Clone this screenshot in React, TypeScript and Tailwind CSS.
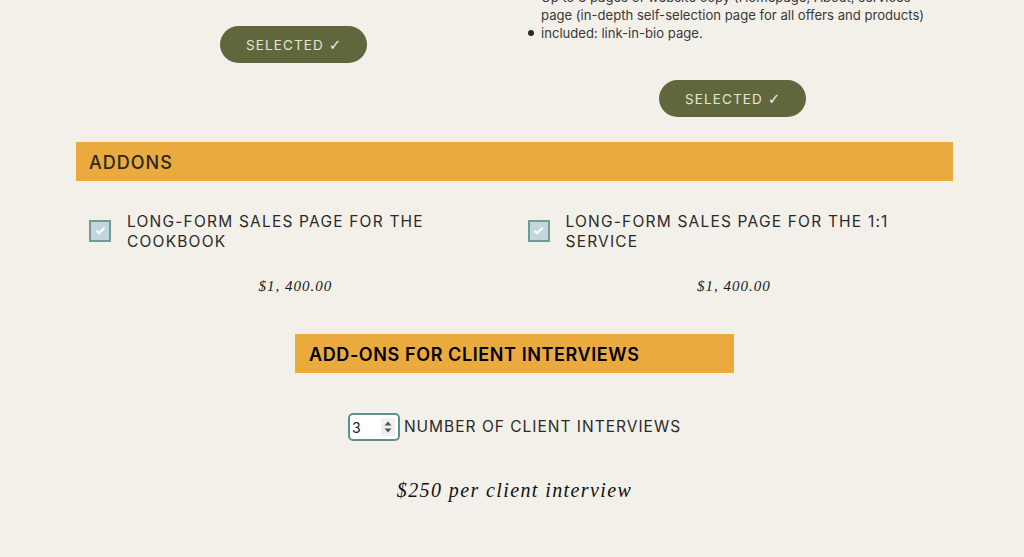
const body = { fontFamily: '"Inter", "Open Sans", sans-serif' };
const script = { fontFamily: '"Liberation Serif", "DejaVu Serif", serif' };

const SelectedButton = () => (
  <button className="flex h-[37px] w-[147px] items-center justify-center gap-[5px] rounded-full bg-[#61673c] pt-px text-[13.5px] tracking-[1.1px] text-[#e4e4d6]">
    SELECTED <span className="font-['DejaVu_Sans'] text-[15px] font-bold leading-none tracking-normal text-[#f0f0e6]">✓</span>
  </button>
);

const Addon = ({ label }: { label: string }) => (
  <div>
    <div className="flex items-center gap-4 pl-[13px] pr-8">
      <div className="mb-[3px] flex h-[22px] w-[22px] shrink-0 items-center justify-center border-2 border-[#6f9c96] bg-[#c3d5dd]">
        <svg width="11" height="9" viewBox="0 0 11 9" fill="none">
          <path d="M1.5 4.8 4.2 7.3 9.5 1.8" stroke="#fff" strokeWidth="2.2" />
        </svg>
      </div>
      <p className="text-[15.5px] leading-[20px] tracking-[1.2px] text-[#2b2a28]">{label}</p>
    </div>
    <p className="mt-[24px] text-center text-[15px] italic leading-[20px] tracking-[1px] text-[#1c1c1c]" style={script}>
      $1, 400.00
    </p>
  </div>
);

const ListItem = ({ text }: { text: string }) => (
  <li className="flex gap-[7px]">
    <span className="mt-[6px] h-[6px] w-[6px] shrink-0 rounded-full bg-[#2b2a28]" />
    <span>{text}</span>
  </li>
);

export default function App() {
  return (
    <div className="h-[557px] w-[1024px] overflow-hidden bg-[#f3f0ea]" style={body}>
      <div className="mx-[76px] mt-[-12px] w-[877px]">
        <div className="grid grid-cols-2">
          <div className="flex justify-center pr-[3px] pt-[38px]">
            <SelectedButton />
          </div>
          <div>
            <ul className="pl-[13.5px] pr-[20px] text-[13.1px] leading-[18px] text-[#3a3936]">
              <ListItem text="Up to 3 pages of website copy (Homepage, About, services page (in-depth self-selection page for all offers and products)" />
              <ListItem text="included: link-in-bio page." />
            </ul>
            <div className="mt-[38px] flex justify-center pr-[2px]">
              <SelectedButton />
            </div>
          </div>
        </div>

        <h2 className="mt-[25px] flex h-[39px] items-center bg-[#ebaa3e] pl-[13px] pt-px text-[18px] font-medium tracking-[1px] text-[#2a2620]">
          ADDONS
        </h2>

        <div className="mt-[31px] grid grid-cols-2">
          <Addon label="LONG-FORM SALES PAGE FOR THE COOKBOOK" />
          <Addon label="LONG-FORM SALES PAGE FOR THE 1:1 SERVICE" />
        </div>

        <h2 className="ml-[219px] mt-[38px] flex h-[39px] w-[439px] items-center bg-[#ebaa3e] pl-[14px] pt-px text-[18px] font-semibold tracking-[0.6px] text-black">
          ADD-ONS FOR CLIENT INTERVIEWS
        </h2>

        <div className="mt-[40px] flex items-center justify-center gap-1">
          <div className="flex h-[28px] w-[52px] items-center justify-between rounded-[5px] border-2 border-[#5f918c] bg-white pl-[2px] pr-[3px] text-[14px] text-[#222]">
            <span>3</span>
            <span className="flex h-[18px] w-[14px] items-center justify-center bg-[#f0f0f0]">
              <svg width="8" height="12" viewBox="0 0 8 12" fill="#555">
                <path d="M4 0.5 7.5 4.5H0.5Z" />
                <path d="M4 11.5 0.5 7.5H7.5Z" />
              </svg>
            </span>
          </div>
          <span className="text-[15.5px] tracking-[1px] text-[#2b2a28]">NUMBER OF CLIENT INTERVIEWS</span>
        </div>

        <p className="mt-[38px] text-center text-[20px] italic leading-[22px] tracking-[1.4px] text-[#111]" style={script}>
          $250 per client interview
        </p>
      </div>
    </div>
  );
}
